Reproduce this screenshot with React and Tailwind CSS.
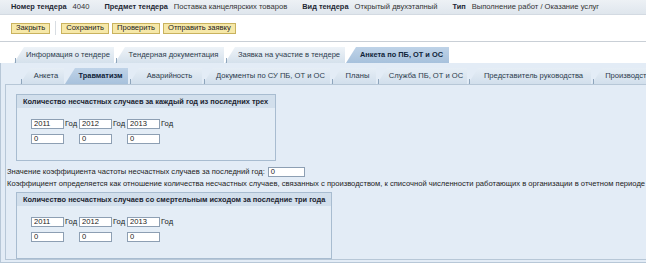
const font = "font-['Liberation_Sans',Arial,sans-serif]";

const headerItems = [
  { label: "Номер тендера", value: "4040" },
  { label: "Предмет тендера", value: "Поставка канцелярских товаров" },
  { label: "Вид тендера", value: "Открытый двухэтапный" },
  { label: "Тип", value: "Выполнение работ / Оказание услуг" },
];

const topTabs = [
  { label: "Информация о тендере", w: "w-[100px]" },
  { label: "Тендерная документация", w: "w-[109px]" },
  { label: "Заявка на участие в тендере", w: "w-[120px]" },
  { label: "Анкета по ПБ, ОТ и ОС", w: "w-[103px]", active: true },
];

const subTabs = [
  { label: "Анкета", w: "w-[44px]" },
  { label: "Травматизм", w: "w-[63px]", active: true },
  { label: "Аварийность", w: "w-[73px]" },
  { label: "Документы по СУ ПБ, ОТ и ОС", w: "w-[127px]" },
  { label: "Планы", w: "w-[45px]" },
  { label: "Служба ПБ, ОТ и ОС", w: "w-[90px]" },
  { label: "Представитель руководства", w: "w-[123px]" },
  { label: "Производственный контроль", w: "w-[120px]" },
];

function Tab({ label, w, active, sub }) {
  const bg = active
    ? "bg-gradient-to-b from-[#bfd3e8] to-[#a7c1dc] font-bold text-[7.4px] text-[#10243a]"
    : sub
      ? "bg-gradient-to-b from-[#e6eef6] to-[#d2dfec] text-[#2b3b4c]"
      : "bg-gradient-to-b from-[#eef3f8] to-[#d5e1ec] text-[#2b3b4c]";
  return (
    <div className={`relative shrink-0 ${w} h-full`}>
      <div
        className={`h-full ${bg} flex items-center justify-center pl-[10px] pr-[2px] whitespace-nowrap [clip-path:polygon(10px_0,100%_0,100%_100%,0_100%)]`}
      >
        {label}
      </div>
      {!active && (
        <div className="absolute left-[1px] bottom-0 w-px h-[5px] bg-[#8ea5bc]" />
      )}
    </div>
  );
}

function YearGroup({ title, w }) {
  const years = ["2011", "2012", "2013"];
  return (
    <div className={`${w} border border-[#a8bcd0] bg-[#e4edf6]`}>
      <div className="h-[13px] bg-[#d2dfec] flex items-center pl-[6px] font-bold text-[7.4px] text-[#1b2430] whitespace-nowrap">
        {title}
      </div>
      <div className="pl-[14px] pt-[11px] pb-[16px] flex flex-col gap-[5px]">
        <div className="flex items-center">
          {years.map((y) => (
            <div key={y} className="flex items-center">
              <div className="w-[33px] h-[10px] bg-white border border-[#8d9fb3] flex items-center pl-[2px]">
                {y}
              </div>
              <span className="w-[15px] pl-[1px]">Год</span>
            </div>
          ))}
        </div>
        <div className="flex items-center">
          {years.map((y) => (
            <div key={y} className="w-[48px]">
              <div className="w-[33px] h-[10px] bg-white border border-[#8d9fb3] flex items-center pl-[2px]">
                0
              </div>
            </div>
          ))}
        </div>
      </div>
    </div>
  );
}

export default function App() {
  return (
    <div className={`w-[646px] h-[272px] overflow-hidden bg-white text-[7.6px] leading-none text-[#222] ${font}`}>
      {/* Header */}
      <div className="h-[15px] bg-gradient-to-b from-[#edf1f5] to-[#dfe6ed] border-b border-[#d3dae2] flex items-center pl-[11px] gap-[15px] whitespace-nowrap">
        {headerItems.map((it) => (
          <div key={it.label} className="flex items-center gap-[6px]">
            <span className="font-bold text-[7.4px] text-[#1d2733]">{it.label}</span>
            <span className="text-[#333]">{it.value}</span>
          </div>
        ))}
      </div>

      {/* Toolbar */}
      <div className="h-[27px] flex items-center pl-[11px] border-b border-[#c9cfd6]">
        <button className="h-[11px] px-[4px] bg-[#f6e8a8] border border-[#c9b25e] text-[#222]">Закрыть</button>
        <div className="w-px h-[14px] bg-[#d8dde2] mx-[5px]" />
        <div className="flex gap-[3px]">
          <button className="h-[11px] px-[4px] bg-[#f6e8a8] border border-[#c9b25e] text-[#222]">Сохранить</button>
          <button className="h-[11px] px-[4px] bg-[#f6e8a8] border border-[#c9b25e] text-[#222]">Проверить</button>
          <button className="h-[11px] px-[4px] bg-[#f6e8a8] border border-[#c9b25e] text-[#222]">Отправить заявку</button>
        </div>
      </div>

      {/* Top tabs */}
      <div className="h-[21px] pt-[5px] pl-[14px] flex gap-[1px]">
        {topTabs.map((t) => (
          <Tab key={t.label} {...t} />
        ))}
      </div>

      {/* Outer content */}
      <div className="h-[200px] bg-[#e3ecf6] border-l border-b border-[#b7c7d7] pt-[5px]">
        <div className="h-[16px] pl-[19px] flex gap-[1px]">
          {subTabs.map((t) => (
            <Tab key={t.label} {...t} sub />
          ))}
        </div>
        <div className="ml-[4px] h-[176px] border-l border-b border-t border-[#b7c7d7] bg-[#e3ecf6] pt-[9px] pl-[10px] flex flex-col">
          <YearGroup
            w="w-[260px]"
            title="Количество несчастных случаев за каждый год из последних трех"
          />
          <div className="-ml-[10px] pl-[1px] mt-[5px] h-[11px] flex items-center gap-[3px] whitespace-nowrap">
            <span>Значение коэффициента частоты несчастных случаев за последний год:</span>
            <div className="w-[37px] h-[10px] bg-white border border-[#8d9fb3] flex items-center pl-[2px]">0</div>
          </div>
          <div className="-ml-[10px] pl-[1px] mt-[2px] h-[10px] flex items-center whitespace-nowrap">
            Коэффициент определяется как отношение количества несчастных случаев, связанных с производством, к списочной численности работающих в организации в отчетном периоде
          </div>
          <div className="mt-[3px]">
            <YearGroup
              w="w-[316px]"
              title="Количество несчастных случаев со смертельным исходом за последние три года"
            />
          </div>
        </div>
      </div>
    </div>
  );
}
